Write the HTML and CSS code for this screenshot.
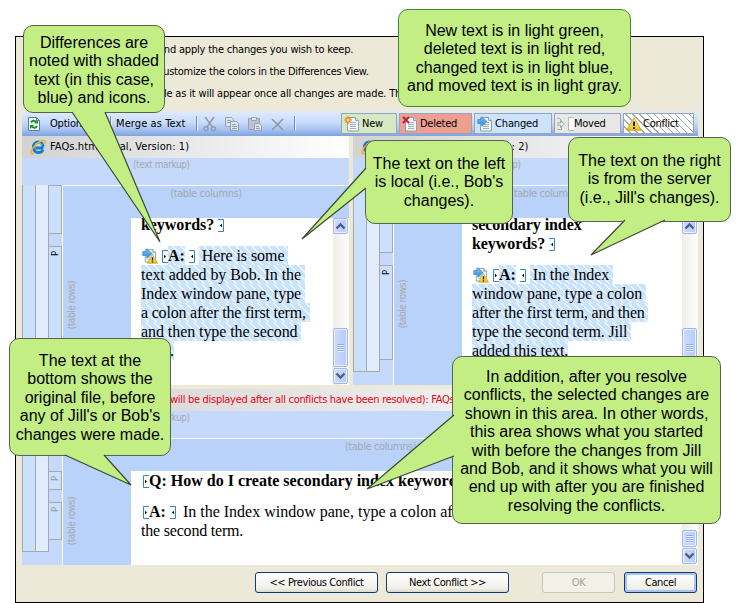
FILE: index.html
```html
<!DOCTYPE html>
<html lang="en">
<head>
<meta charset="utf-8">
<title>Differences</title>
<link rel="stylesheet" href="styles.css">
</head>
<body>
<svg class="defs" width="0" height="0">
  <defs>
    <linearGradient id="warn" x1="0" y1="0" x2="0" y2="1"><stop offset="0" stop-color="#fff9a0"/><stop offset="1" stop-color="#f0bf10"/></linearGradient>
    <linearGradient id="blue" x1="0" y1="0" x2="0" y2="1"><stop offset="0" stop-color="#7cc8fa"/><stop offset="1" stop-color="#2a86d0"/></linearGradient>
    <symbol id="page" viewBox="0 0 16 16"><path d="M3.500 1.500h8l3 3v10.500h-11z" fill="#f2f8fa" stroke="#8aa3ad"/><path d="M11.500 1.500v3h3" fill="#cfe0e8" stroke="#8aa3ad"/><path d="M6 6.500h6M6 8.500h6M6 10.500h6M6 12.500h6" stroke="#9fb4bd"/></symbol>
    <symbol id="tri" viewBox="0 0 16 14"><path d="M8 .8L15.300 13.200H.7z" fill="url(#warn)" stroke="#c9a21c" stroke-linejoin="round"/><path d="M8 4.500v4.500M8 10.300v1.800" stroke="#222" stroke-width="2"/></symbol>
    <symbol id="arrow" viewBox="0 0 16 16"><path d="M.8 3.500h4V.8L10 5.500 4.800 10.200V7.500h-4z" fill="url(#blue)" stroke="#3d92d4" stroke-width=".8"/></symbol>
    <symbol id="ie" viewBox="0 0 16 16"><path d="M13.500 9H5.300M13.200 7.800C12.800 4.800 10.800 3 8.300 3 5.300 3 3.300 5.400 3.300 8.300s2 5.200 5.100 5.200c2.100 0 3.800-1 4.600-2.700" fill="none" stroke="#187cc8" stroke-width="2.800"/><path d="M5 5.500C7 3 11 3.500 12 6" fill="none" stroke="#7dd0fa"/><path d="M15 4.500c.6-2.500-.6-3.500-3-2.700C7.500 3.200 2 8.500 1 12.500c-.5 2 .8 2.800 3 1.700" fill="none" stroke="#eeb129" stroke-width="1.500"/></symbol>
    <symbol id="conf" viewBox="0 0 16 16"><use href="#page" width="15" height="15"/><use href="#arrow" width="16" height="16"/><use href="#tri" x="5" y="6" width="11" height="10"/></symbol>
    <symbol id="ob" viewBox="0 0 6 14"><path d="M6 .5H.5v12H6" fill="none" stroke="#3385cc"/><path d="M2 4.800v3.400L4 6.500z"/></symbol>
    <symbol id="cb" viewBox="0 0 6 14"><path d="M0 .5h5.500v12H0" fill="none" stroke="#3385cc"/><path d="M4 4.800v3.400L2 6.500z"/></symbol>
  </defs>
</svg>

<main class="dialog">
  <section class="intro">
    <p><span class="lead">Review the differences</span><span class="i1">and apply the changes you wish to keep.</span></p>
    <p><span class="lead">You can</span><span class="i2">customize the colors in the Differences View.</span></p>
    <p><span class="lead">View the</span><span class="i3">file as it will appear once all changes are made. This file</span></p>
  </section>

  <nav class="toolbar">
    <svg class="refresh" width="14" height="16"><path d="M1.500 1.500h8l3 3v10h-11z" fill="#f7fbff" stroke="#557f9d"/><path d="M9.500 1.500v3h3" fill="none" stroke="#557f9d"/><path d="M4 6.500C5.500 4 8.500 4.500 9 6.500M10 10C8.500 12.500 5.500 12 5 10" fill="none" stroke="#159323" stroke-width="2"/><path d="M7 7.500h4V4zM7 9H3v4z" fill="#159323"/></svg>
    <span class="opt">Options</span>
    <i class="sep"></i>
    <span class="merge">Merge as Text</span>
    <i class="sep"></i>
    <svg class="tool cut" width="14" height="16" fill="none" stroke="#939baa" stroke-width="1.500"><path d="M2 1l7.500 10M11 1L4 11"/><circle cx="3" cy="12.700" r="2"/><circle cx="10.500" cy="12.700" r="2"/></svg>
    <svg class="tool copy" width="16" height="16" fill="#dce3ec" stroke="#98a1b0"><path d="M1.500 1.500h6l2 2v7h-8z"/><path d="M3 4.500h4M3 6.500h4"/><path d="M6.500 5.500h6l2 2v7h-8z"/><path d="M8 8.500h4M8 10.500h5M8 12.500h5"/></svg>
    <svg class="tool paste" width="16" height="16" fill="#bcc4d1" stroke="#98a1b0"><path d="M1.500 2.500h11v11h-11z"/><path d="M4.500 1.500h5v3h-5z" fill="#dce3ec"/><path d="M7.500 7.500h5l2 2v5h-7z" fill="#dce3ec"/><path d="M9 10.500h3M9 12.500h4"/></svg>
    <svg class="tool del" width="13" height="14" fill="none" stroke="#8f98a8" stroke-width="1.600"><path d="M1 2l11 11M12 2L1 13"/></svg>
    <i class="sep"></i>
    <div class="legend">
      <span class="key new"><svg width="16" height="16"><use href="#page" width="16" height="16"/><path d="M4 .5v7M.5 4h7M1.500 1.500l5 5M6.500 1.500l-5 5" stroke="#ed6b19" stroke-width="1.300"/><circle cx="4" cy="4" r="1.800" fill="#ffe34d"/></svg>New</span>
      <span class="key deleted"><svg width="16" height="16"><use href="#page" width="16" height="16"/><path d="M1 1l6 6M7 1L1 7" stroke="#c3222a" stroke-width="2"/></svg>Deleted</span>
      <span class="key changed"><svg width="16" height="16"><use href="#page" width="16" height="16"/><use href="#arrow" width="16" height="16"/></svg>Changed</span>
      <span class="key moved"><svg width="17" height="16"><path d="M.5 2.500h2l2 2v2M.5 13.500h4v-3M0 7h3.500V4.500L7.500 8l-4 3.500V9H0" fill="#eef4f2" stroke="#9aa9a5"/><path d="M17 1.500h-5.500v13H17" fill="#fff" stroke="#aabbb9"/></svg>Moved</span>
      <span class="key conflict"><svg width="16" height="14"><use href="#tri" width="16" height="14"/></svg>Conflict</span>
    </div>
  </nav>

  <div class="compare">
    <section class="pane left">
      <header><svg width="16" height="16"><use href="#ie"/></svg><span>FAQs.htm (local, Version: 1)</span></header>
      <div class="markup">(text markup)</div>
      <div class="doc">
        <div class="gutter"><i class="bar b1"></i><i class="bar b2"></i><div class="tags"><i class="tag t1"></i><i class="tag t2"><b>P</b></i></div></div>
        <div class="table">
          <div class="cols">(table columns)</div>
          <div class="row">
            <div class="rows"><span>(table rows)</span></div>
            <article>
              <p><strong>keywords?</strong> <svg class="br" width="6" height="14"><use href="#cb"/></svg></p>
              <p><svg class="ci" width="16" height="16"><use href="#conf"/></svg><svg class="br ob" width="6" height="14"><use href="#ob"/></svg><strong class="hl">A:</strong><svg class="br cb" width="6" height="14"><use href="#cb"/></svg><span class="hl first">Here is some </span><br><span class="hl">text added by Bob. In the </span><br><span class="hl">Index window pane, type </span><br><span class="hl tight">a colon after the first term, </span><br><span class="hl">and then type the second </span><br><span class="hl">term.</span></p>
            </article>
            <div class="scroll"><svg class="sb" width="15" height="16"><path d="M3.500 10.500l4-4 4 4"/></svg><i class="thumb"></i><svg class="sb" width="15" height="16"><path d="M3.500 5.500l4 4 4-4"/></svg></div>
          </div>
        </div>
      </div>
    </section>
    <section class="pane right">
      <header><svg width="16" height="16"><use href="#ie"/></svg><span>FAQs.htm (server, Version: 2)</span></header>
      <div class="markup">(text markup)</div>
      <div class="doc">
        <div class="gutter"><i class="bar b1"></i><i class="bar b2"></i><div class="tags"><i class="tag t1"></i><i class="tag t2"><b>P</b></i></div></div>
        <div class="table">
          <div class="cols">(table columns)</div>
          <div class="row">
            <div class="rows"><span>(table rows)</span></div>
            <article>
              <p><strong>secondary index<br>keywords?</strong> <svg class="br" width="6" height="14"><use href="#cb"/></svg></p>
              <p><svg class="ci" width="16" height="16"><use href="#conf"/></svg><svg class="br ob" width="6" height="14"><use href="#ob"/></svg><strong class="hl">A:</strong><svg class="br cb" width="6" height="14"><use href="#cb"/></svg><span class="hl first">In the Index </span><br><span class="hl">window pane, type a colon </span><br><span class="hl tight">after the first term, and then </span><br><span class="hl tight">type the second term. Jill </span><br><span class="hl">added this text.</span></p>
            </article>
            <div class="scroll"><svg class="sb" width="15" height="16"><path d="M3.500 10.500l4-4 4 4"/></svg><i class="thumb"></i><svg class="sb" width="15" height="16"><path d="M3.500 5.500l4 4 4-4"/></svg></div>
          </div>
        </div>
      </div>
    </section>
  </div>

  <section class="pane bottom">
    <header class="notice"><span class="nlead">(The file</span><span class="nmain">will be displayed after all conflicts have been resolved): FAQs.htm</span></header>
    <div class="markup">(text markup)</div>
    <div class="doc">
      <div class="gutter"><i class="bar b1"></i><i class="bar b2"></i><div class="tags"><i class="tag t1"><b>P</b></i><i class="tag t2"><b>P</b></i></div></div>
      <div class="table">
        <div class="cols">(table columns)</div>
        <div class="row">
          <div class="rows"><span>(table rows)</span></div>
          <article>
            <p><svg class="br ob" width="6" height="14"><use href="#ob"/></svg><strong class="q">Q: How do I create secondary index keywords?</strong></p>
            <p><svg class="br ob" width="6" height="14"><use href="#ob"/></svg><strong>A:</strong><svg class="br cb" width="6" height="14"><use href="#cb"/></svg><span class="first">In the Index window pane, type a colon after the first term,</span><br><span class="tight">the second term.</span></p>
          </article>
          <div class="scroll"><svg class="sb" width="15" height="16"><path d="M3.500 10.500l4-4 4 4"/></svg><i class="thumb"></i><svg class="sb" width="15" height="16"><path d="M3.500 5.500l4 4 4-4"/></svg></div>
        </div>
      </div>
    </div>
  </section>

  <footer>
    <button class="prev">&lt;&lt; Previous Conflict</button>
    <button class="next">Next Conflict &gt;&gt;</button>
    <button class="ok" disabled>OK</button>
    <button class="cancel">Cancel</button>
  </footer>
</main>

<aside class="callout c1">Differences are<br>noted with shaded<br>text (in this case,<br>blue) and icons.</aside>
<aside class="callout c2">New text is in light green,<br>deleted text is in light red,<br>changed text is in light blue,<br>and moved text is in light gray.</aside>
<aside class="callout c3">The text on the left<br>is local (i.e., Bob's<br>changes).</aside>
<aside class="callout c4">The text on the right<br>is from the server<br>(i.e., Jill's changes).</aside>
<aside class="callout c5">The text at the<br>bottom shows the<br>original file, before<br>any of Jill's or Bob's<br>changes were made.</aside>
<aside class="callout c6">In addition, after you resolve<br>conflicts, the selected changes are<br>shown in this area. In other words,<br>this area shows what you started<br>with before the changes from Jill<br>and Bob, and it shows what you will<br>end up with after you are finished<br>resolving the conflicts.</aside>
<svg class="tails" width="740" height="603" fill="#c2ee84" stroke="#3c4a34" stroke-width="1.200">
  <path d="M72 112L160 242 105 112"/>
  <path d="M366 168L302 239 366 188"/>
  <path d="M625 220L591 255 665 220"/>
  <path d="M65 455L131 485 104 455"/>
  <path d="M454 415L367 489 454 456"/>
</svg>
</body>
</html>
```
FILE: styles.css
```css
* { box-sizing: border-box; }
body { margin: 0; width: 740px; height: 603px; background: #fff; overflow: hidden; position: relative; font: 11px/14px "DejaVu Sans Condensed", "DejaVu Sans", sans-serif; color: #000; letter-spacing: -.2px; white-space: nowrap; }
p { margin: 0; }
i { font-style: normal; }
svg { flex: none; display: block; }
.defs { position: absolute; }
.dialog { margin: 36px 0 0 15px; width: 689px; height: 567px; border: 1px solid #000; background: #ece9d8; padding: 0 5px 0 6px; display: flex; flex-direction: column; }
.intro { height: 74px; padding-top: 1px; }
.intro p { height: 22px; line-height: 23px; display: flex; }
.lead { width: 136px; padding-right: 4px; text-align: right; flex: none; }
.i2 { letter-spacing: -.26px; }
.i3 { letter-spacing: -.17px; }

.toolbar { height: 25px; width: 676px; flex: none; display: flex; align-items: center; background: linear-gradient(#e0ebfd, #c9dcfb 45%, #a9c5f2 72%, #7ea3de); padding-left: 5px; }
.opt { width: 60px; margin-left: 9px; }
.sep { width: 1px; height: 15px; background: #6a8ccb; box-shadow: 1px 0 #eaf2ff; }
.merge { width: 80px; margin-left: 5px; letter-spacing: .1px; }
.cut { margin-left: 6px; }
.copy { margin-left: 7px; }
.paste { margin-left: 7px; }
.del { margin: 0 10px 0 8px; }
.legend { display: flex; gap: 2px; margin-left: 46px; letter-spacing: -.25px; }
.key { height: 21px; border: 1px solid #9da5ad; display: flex; align-items: center; gap: 2px; padding-left: 2px; }
.new { width: 56px; background: #d6e9c5; }
.deleted { width: 73px; background: #ef9f92; }
.changed { width: 78px; background: #cce3fd; letter-spacing: -.15px; }
.moved { width: 67px; background: #e7e7e7; gap: 0; }
.conflict { width: 71px; background: repeating-linear-gradient(45deg, #fff 0 4px, #aaa 4px 5px); gap: 1px; }

.compare { display: flex; gap: 4px; height: 249px; width: 676px; flex: none; margin-bottom: 4px; }
.pane { display: flex; flex-direction: column; overflow: hidden; background: #c4d9fb; }
.left { width: 327px; }
.right { width: 345px; }
.bottom { width: 676px; height: 176px; flex: none; }
.pane header { height: 22px; flex: none; display: flex; align-items: center; gap: 4px; padding-left: 8px; background: linear-gradient(90deg, #d2d2d2, #fff); letter-spacing: .1px; }
.markup { height: 27px; flex: none; padding-left: 111px; line-height: 13px; color: #a8a8ad; font-size: 10px; letter-spacing: -.4px; }
.doc { flex: 1; min-height: 0; display: flex; }
.gutter { width: 40px; flex: none; display: flex; }
.bar { width: 14px; border: 1px solid #a8a8a8; border-top: 0; background: #cae0fd; margin-right: -1px; }
.b2 { background: #e2ecff; }
.tags { width: 14px; display: flex; flex-direction: column; }
.tag { border: 1px solid #a8a8a8; background: #cae0fd; writing-mode: vertical-rl; line-height: 12px; padding-top: 4px; }
.tag b { font-weight: 400; font-size: 9.500px; display: inline-block; transform: rotate(180deg); }
.left .t1 { height: 49px; margin-bottom: 12px; }
.left .t2 { flex: 1; }
.right .bar { height: 187px; }
.right .t1 { height: 68px; margin-bottom: 12px; }
.right .t2 { height: 95px; }
.bottom .bar { height: 114px; }
.bottom .t1 { height: 19px; margin: 33px 0 12px; }
.bottom .t2 { height: 38px; }
.bottom .tag b { color: #999; }
.table { flex: 1; min-width: 0; border: solid #fff; border-width: 1px 0 0 1px; display: flex; flex-direction: column; background: #b9d2fa; }
.cols { height: 32px; flex: none; text-align: center; line-height: 16px; color: #a8a8ad; letter-spacing: -.4px; }
.row { flex: 1; min-height: 0; display: flex; }
.rows { width: 68px; flex: none; color: #a8a8ad; font-size: 10px; }
.rows span { writing-mode: vertical-rl; transform: rotate(180deg); margin: 63px 0 0 2px; display: block; width: 14px; line-height: 14px; letter-spacing: -.45px; }
.right .rows span { margin-top: 62px; }
.bottom .rows span { margin-top: 26px; }
article { flex: 1; min-width: 0; overflow: hidden; background: #fff; padding-left: 10px; font: 16px/19px "Liberation Serif", serif; letter-spacing: -.07px; }
article p { margin-bottom: 12px; }
.left article p:first-child, .right article p:first-child { margin-top: -3px; }
.bottom article { letter-spacing: 0; }
.bottom article p { margin-top: 0; }
article svg { display: inline-block; vertical-align: -3px; }
.ci { margin: 0 4px 0 1px; }
.bottom .ob { margin-left: 2px; }
.cb { margin-left: 4px; }
.first { margin-left: 4px; padding-left: 3px; }
.tight { letter-spacing: -.2px; }
.hl { display: inline-block; height: 19px; white-space: pre; background: repeating-linear-gradient(45deg, #cae3fd 0 4.600px, #edf6ff 4.600px 5.660px); }
.scroll { width: 16px; flex: none; border-right: 1px solid #fff; background: linear-gradient(90deg, #eeede6, #fdfdfb); display: flex; flex-direction: column; }
.sb, .thumb { border: 1px solid #9db6ee; border-radius: 2px; background: linear-gradient(90deg, #cddbfd, #b6cbfa); box-shadow: inset 0 0 0 1px #eaf0ff; flex: none; }
.sb path { fill: none; stroke: #4d6185; stroke-width: 2.400; transform: translate(-1px, -1px); }
.thumb { height: 39px; margin-top: auto; margin-bottom: 1px; display: block; background: repeating-linear-gradient(#8caff1 0 1px, #e5edff 1px 2px) center / 7px 8px no-repeat, linear-gradient(90deg, #cddbfd, #b6cbfa); }
.scroll .sb:last-child { margin-bottom: 1px; }
.bottom .thumb { height: 17px; }
.pane .notice { gap: 0; padding: 0; color: #f00014; letter-spacing: -.3px; }
.nlead { width: 148px; flex: none; text-align: right; padding-right: 3px; }

footer { display: flex; padding: 7px 0 0 233px; }
button { height: 21px; padding: 0; border: 1px solid #0c3c78; border-radius: 3px; background: linear-gradient(#fff, #f1f0ea 80%, #dcd8cc); font: inherit; letter-spacing: -.4px; color: #000; }
.prev { width: 123px; }
.next { width: 123px; margin-left: 8px; }
.ok { width: 73px; margin-left: 33px; border-color: #c9c7ba; background: #f2f1e8; color: #a5a395; }
.cancel { width: 73px; margin-left: 9px; box-shadow: inset 0 0 0 2px #a9c4f2; }

.callout { position: absolute; border: 1.500px solid #56644e; border-radius: 10px; background: #c2ee84; text-align: center; font: 16px/18.400px "Liberation Sans", sans-serif; letter-spacing: 0; }
.c1 { left: 23px; top: 25px; width: 142px; height: 88px; padding-top: 8px; }
.c2 { left: 398px; top: 9px; width: 233px; height: 98px; padding-top: 12px; border-color: #3b8b3b; }
.c3 { left: 365px; top: 140px; width: 148px; height: 84px; padding-top: 14px; }
.c4 { left: 568px; top: 137px; width: 163px; height: 85px; padding-top: 14px; }
.c5 { left: 9px; top: 338px; width: 162px; height: 118px; padding-top: 13px; }
.c6 { left: 452px; top: 356px; width: 269px; height: 168px; padding-top: 11px; }
.tails { position: absolute; left: 0; top: 0; }
```
